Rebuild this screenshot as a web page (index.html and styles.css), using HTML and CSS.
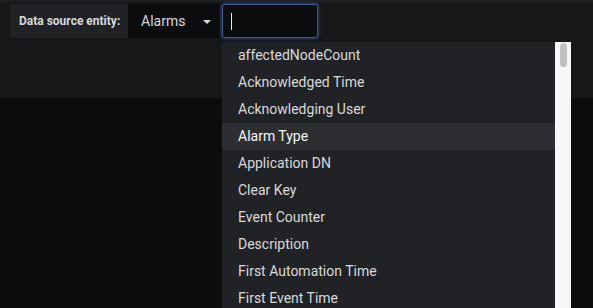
FILE: index.html
```html
<!DOCTYPE html>
<html lang="en">
<head>
  <meta charset="UTF-8">
  <meta name="viewport" content="width=device-width, initial-scale=1.0">
  <title>Data source entity</title>
  <link rel="stylesheet" href="styles.css">
</head>
<body>
  <div class="top_band"></div>
  <div class="editor">
    <div class="form_row">
      <label class="label">Data source entity:</label>
      <div class="select">
        <span>Alarms</span>
        <span class="caret"></span>
      </div>
      <div class="input"><span class="cursor"></span></div>
    </div>
  </div>
  <div class="panel"></div>

  <!-- 열린 자동완성 목록 -->
  <div class="dropdown">
    <ul class="options">
      <li>affectedNodeCount</li>
      <li>Acknowledged Time</li>
      <li>Acknowledging User</li>
      <li class="active">Alarm Type</li>
      <li>Application DN</li>
      <li>Clear Key</li>
      <li>Event Counter</li>
      <li>Description</li>
      <li>First Automation Time</li>
      <li>First Event Time</li>
    </ul>
    <div class="scroll"><div class="thumb"></div></div>
  </div>
</body>
</html>
```

FILE: styles.css
```css
* {margin: 0;padding: 0;list-style: none;box-sizing: border-box;}
body {background-color: #0b0c0e; font-family: Roboto, "Liberation Sans", sans-serif; color: #d8d9da; overflow: hidden;}
.top_band {height: 2px; background-color: #1f2023;}
.editor {height: 96px; background-color: #161719; padding: 2px 0 0 10px;}
.form_row {display: flex; height: 34px;}
.label {
  width: 118px;
  padding-left: 9px;
  line-height: 34px;
  font-size: 12px;
  font-weight: 700;
  background-color: #202226;
  border-radius: 3px 0 0 3px;
}
.select {
  width: 92px;
  display: flex;
  align-items: center;
  justify-content: space-between;
  padding: 0 9px 0 13px;
  font-size: 14px;
  background-color: #0b0c0e;
}
.caret {
  width: 0; height: 0;
  border-left: 4px solid transparent;
  border-right: 4px solid transparent;
  border-top: 4px solid #d8d9da;
  margin-top: 1px;
}
.input {
  width: 96px;
  margin-left: 2px;
  background-color: #0b0c0e;
  border: 1px solid #3b5b93;
  border-radius: 3px;
  box-shadow: 0 0 3px 1px rgba(50, 90, 160, 0.6);
  display: flex;
  align-items: center;
  padding-left: 8px;
}
.cursor {width: 1px; height: 17px; background-color: #e8e8e8;}

.dropdown {
  position: absolute;
  left: 222px;
  top: 42px;
  width: 349px;
  height: 266px;
  overflow: hidden;
  display: flex;
  background-color: #212226;
}
.options {flex: 1;}
.options li {height: 27px; line-height: 27px; padding-left: 16px; font-size: 14px; color: #d8d9da;}
.options li.active {background-color: #2d2e32; color: #f4f5f5;}
.scroll {width: 16px; background-color: #f7f7f7; padding: 1px 4px 0 5px;}
.thumb {height: 24px; background-color: #c1c1c1; border-radius: 4px;}
```
